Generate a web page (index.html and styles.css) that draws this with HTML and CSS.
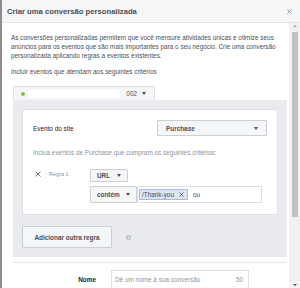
FILE: index.html
```html
<!DOCTYPE html>
<html lang="pt">
<head>
<meta charset="utf-8">
<link rel="stylesheet" href="styles.css">
</head>
<body>
<div class="dialog">
  <div class="header">
    <span class="title">Criar uma conversão personalizada</span>
    <svg class="close" width="5" height="5" viewBox="0 0 5 5"><path d="M0.5 0.5L4.5 4.5M4.5 0.5L0.5 4.5" stroke="#7f838a" stroke-width="0.9"/></svg>
  </div>
  <div class="main">
    <div class="content">
      <p class="intro">As conversões personalizadas permitem que você mensure atividades únicas e otimize seus anúncios para os eventos que são mais importantes para o seu negócio. Crie uma conversão personalizada aplicando regras a eventos existentes.</p>
      <p class="criteria">Incluir eventos que atendam aos seguintes critérios</p>
      <div class="pixel-tab">
        <span class="dot"></span>
        <span class="pixel-name"></span>
        <span class="pixel-id">002</span>
        <span class="caret"></span>
      </div>
      <div class="panel">
        <div class="card">
          <div class="event-row">
            <span class="label">Evento do site</span>
            <span class="select select-wide">Purchase<span class="caret"></span></span>
          </div>
          <p class="hint">Inclua eventos de Purchase que cumpram os seguintes critérios:</p>
          <div class="rule">
            <div class="rule-head">
              <svg class="rule-x" width="6" height="6" viewBox="0 0 6 6"><path d="M0.5 0.5L5.5 5.5M5.5 0.5L0.5 5.5" stroke="#4b4f56" stroke-width="0.8"/></svg>
              <span class="rule-name">Regra 1</span>
            </div>
            <div class="rule-body">
              <span class="select select-url">URL<span class="caret"></span></span>
              <div class="cond">
                <span class="select select-op">contém<span class="caret"></span></span>
                <div class="tag-input">
                  <span class="tag">/Thank-you<svg width="5" height="5" viewBox="0 0 5 5"><path d="M0.5 0.5L4.5 4.5M4.5 0.5L0.5 4.5" stroke="#4b4f56" stroke-width="0.8"/></svg></span>
                  <span class="or">ou</span>
                </div>
              </div>
            </div>
          </div>
        </div>
        <div class="add-row">
          <span class="btn">Adicionar outra regra</span>
          <span class="info">i</span>
        </div>
      </div>
      <div class="name-row">
        <span class="name-label">Nome</span>
        <div class="name-input"><span class="placeholder">Dê um nome à sua conversão</span><span class="count">50</span></div>
      </div>
    </div>
    <div class="scrollbar">
      <span class="arrow up"></span>
      <span class="thumb"></span>
      <span class="track-rest"></span>
      <span class="arrow down"></span>
    </div>
  </div>
</div>
</body>
</html>
```
FILE: styles.css
```css
* { box-sizing: border-box; margin: 0; padding: 0; }
html, body { width: 300px; height: 288px; overflow: hidden; }
body {
  font-family: "Liberation Sans", Arial, sans-serif;
  font-size: 6.4px;
  line-height: 9px;
  color: #4b4f56;
  background: #fff;
}
.dialog {
  height: 288px;
  border-left: 2px solid #8e8e8e;
  display: flex;
  flex-direction: column;
}
.header {
  flex: none;
  height: 23px;
  background: #f5f6f7;
  border-bottom: 1px solid #e5e5e5;
  display: flex;
  align-items: center;
  justify-content: space-between;
  padding: 0 8px 0 5px;
}
.title { font-weight: bold; font-size: 7.7px; color: #4b4f56; }
.main { flex: 1; display: flex; min-height: 0; }
.content { flex: 1; padding: 10px 2px 0 9px; overflow: hidden; }
.intro { margin-bottom: 7px; }
.criteria { margin-bottom: 10px; }
.pixel-tab {
  margin-left: 2px;
  width: 142px;
  height: 14px;
  background: #f5f6f7;
  border: 1px solid #dddfe2;
  border-bottom: none;
  display: flex;
  align-items: center;
  padding: 0 8px 0 7px;
}
.dot { width: 4px; height: 4px; border-radius: 50%; background: #7fc241; }
.pixel-name { flex: 1; height: 8px; margin: 0 6px 0 3px; background: #fff; }
.pixel-id { color: #4b4f56; }
.caret {
  display: inline-block;
  width: 0; height: 0;
  border-left: 2.5px solid transparent;
  border-right: 2.5px solid transparent;
  border-top: 3px solid #4b4f56;
  margin-left: 5px;
}
.panel { margin-left: 2px; background: #e9ebee; padding: 9px; }
.card { background: #fff; border: 1px solid #dddfe2; padding: 10px 10px 11px 10px; }
.event-row { display: flex; align-items: center; justify-content: space-between; }
.label { color: #1d2129; }
.select {
  display: inline-flex;
  align-items: center;
  justify-content: space-between;
  background: #f5f6f7;
  border: 1px solid #ccd0d5;
  border-radius: 1px;
  font-weight: bold;
  color: #4b4f56;
  padding: 0 6px;
}
.select-wide { width: 110px; height: 16px; padding: 0 8px; }
.hint { color: #90949c; margin-top: 12px; }
.rule { display: flex; margin-top: 12px; }
.rule-head { width: 57px; display: flex; align-items: flex-start; padding: 2px 0 0 2px; }
.rule-name { font-size: 5.5px; line-height: 6px; color: #90949c; margin-left: 8px; }
.rule-body { display: flex; flex-direction: column; align-items: flex-start; gap: 4px; }
.select-url { width: 38px; height: 13px; }
.cond { display: flex; }
.select-op { width: 47px; height: 17px; }
.tag-input {
  width: 125px; height: 17px;
  border: 1px solid #dddfe2;
  display: flex; align-items: center;
  padding-left: 1px;
}
.tag {
  display: inline-flex; align-items: center; gap: 5px;
  height: 11px;
  background: #dbe4f3;
  border: 1px solid #a7bbde;
  padding: 0 3px 0 2px;
  color: #4b4f56;
}
.or { color: #4b4f56; margin-left: 5px; }
.add-row { display: flex; align-items: center; margin-top: 11px; }
.btn {
  height: 22px; width: 90px;
  display: inline-flex; align-items: center; justify-content: center;
  background: #f5f6f7; border: 1px solid #ccd0d5; border-radius: 1px;
  font-weight: bold; color: #4b4f56;
}
.info {
  width: 5px; height: 5px; border-radius: 50%;
  background: #bec2c9; color: #fff;
  font-size: 4px; line-height: 5px; text-align: center; font-weight: bold;
  margin-left: 14px;
}
.name-row {
  margin: 5px 0 0 2px;
  border-top: 1px solid #e5e5e5;
  padding-top: 7px;
  display: flex; align-items: center;
}
.name-label { width: 98px; text-align: right; font-weight: bold; color: #1d2129; padding-right: 15px; }
.name-input {
  width: 138px; height: 19px;
  border: 1px solid #dddfe2;
  display: flex; align-items: center; justify-content: space-between;
  padding: 0 5px 0 3px;
}
.placeholder, .count { color: #90949c; }
.scrollbar {
  flex: none; width: 11px; background: #f1f1f1;
  display: flex; flex-direction: column; align-items: center;
}
.arrow { width: 0; height: 0; border-left: 2px solid transparent; border-right: 2px solid transparent; }
.arrow.up { border-bottom: 2px solid #a3a3a3; margin: 2px 0 5px; }
.arrow.down { border-top: 2px solid #505050; margin: 0 0 2px; }
.thumb { width: 6px; height: 185px; background: #c1c1c1; }
.track-rest { flex: 1; }
```
